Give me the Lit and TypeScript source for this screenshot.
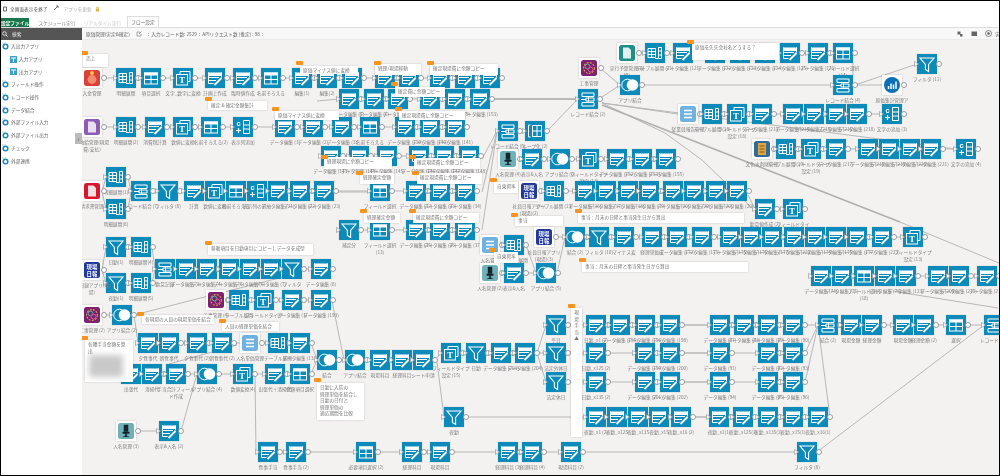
import { LitElement, html, css, svg } from "lit";
import { customElement } from "lit/decorators.js";

const OX = 83, OY = 40;
type N = [number, string, string?];
type G = { y: number; items: N[]; nochain?: boolean };

const E = "edit", S = "sel", X = "exp", T = "t", M = "merge", F = "filter", O = "toggle", C = "col", L = "loop";
const ED = "データ編集";

const groups: G[] = [
  { y: 68, items: [[83, "a-pig", "入金管理"], [117, X, "明細展開"], [142, S, "項目選択"], [174, T, "文字_数字に変換"], [206, E, "計画上作成"], [234, E, "臨時値作成"], [262, S, "名前そろえる"], [293, E, "編集(1)"], [318, E, "編集(2)"], [343, E], [376, E], [400, E], [431, E], [456, E], [481, E]] },
  { y: 89, items: [[340, E, ED + " (5)"], [365, E, ED + " (6)"], [389, E, ED + " (7)"], [421, E, ED + " (8)"], [446, E, ED + " (9)"], [471, E, ED + " (153)"], [579, M, "レコード結合 (2)"]] },
  { y: 117, items: [[83, "a-doc-p", "大曲給管理(現場費/支払)"], [117, X, "明細展開(2)"], [146, E, "消費税計算"], [174, T, "数値に変換"], [202, S, "名前そろえる(2)"], [234, C, "表示列追加"], [276, E, ED + " (1)"], [304, E, ED + " (2)"], [333, E, ED + " (3)"], [361, S, "名前そろえる"], [396, E, ED + " (139)"], [421, E, ED + " (140)"], [446, E, ED + " (141)"]] },
  { y: 146, items: [[322, E, ED + " (143)"], [350, E, ED + " (144)"], [378, E, ED + " (145)"], [410, E, ED + " (146)"], [435, E, ED + " (147)"], [460, E, ED + " (148)"]] },
  { y: 167, items: [[107, X, "明細展開(1)"]], nochain: true },
  { y: 199, items: [[107, X, "明細展開(8)"]], nochain: true },
  { y: 181, items: [[83, "a-doc-r", "請求書管理"]], nochain: true },
  { y: 181, items: [[132, M, "レコード結合 (7)"], [159, F, "フィルタ (8)"], [185, E, "計算"], [206, T, "数値に変換"], [227, S, "名前そろえる"], [248, C, "表示列の追加"], [269, E, ED + " (21)"], [291, E, ED + " (22)"], [315, E, ED + " (23)"], [371, S, "フィールド選択"], [407, E, ED + " (32)"], [431, E, ED + " (33)"], [456, E, ED + " (34)"]] },
  { y: 220, items: [[340, F, "補定分"], [371, S, "フィールド選択 (13)"], [407, E, ED + " (35)"], [431, E, ED + " (36)"], [456, E, ED + " (37)"]] },
  { y: 237, items: [[107, F, "日勤(1)"], [132, X, "明細展開(4)"]] },
  { y: 273, items: [[107, F, "夜勤(1)"], [132, X, "明細展開(5)"]] },
  { y: 260, items: [[83, "a-nippo", "毎日録アプリ(現場)"]], nochain: true },
  { y: 259, items: [[156, M, "勤怠記録"], [177, E, ED + " (3)"], [198, E, ED + " (4)"], [220, E, ED + " (5)"], [241, E, ED + " (6)"], [262, E, ED + " (7)"], [283, F, "フィルタ"], [312, E, ED + " (8)"]] },
  { y: 290, items: [[207, "a-kouji", "工事管理 (4)"], [230, X, "テーブル展開"], [255, T, "フィールドタイプ"], [283, E, ED + " (1)"], [312, E, ED + " (193)"]] },
  { y: 305, items: [[83, "a-kouji", "工事管理 (2)"], [113, O, "アプリ結合 (2)"]] },
  { y: 333, items: [[139, E, "夕食事代"], [160, E, "朝食事代"], [188, E, "夕食事代 (2)"], [213, E, "朝食事代 (2)"], [241, "a-list", "人名単価管理"], [269, X, "テーブル展開"], [291, E, ED + " (132)"]] },
  { y: 364, items: [[122, E, "出張代"], [143, E, "清掃代"], [167, E, "手当合計フィールド作成"], [198, O, "アプリ結合 (4)"], [234, T, "数値変換(4)"], [266, E, "出張代＋清掃代"], [291, S, "金額項目選択"]] },
  { y: 421, items: [[117, "a-chair", "人名管理 (3)"], [160, E, "表示&人名 (2)"]] },
  { y: 442, items: [[259, E, "食事手当"], [287, E, "食事手当 (2)"], [357, S, "必要項目選択 (2)"], [403, E, "経理科目"], [431, E, "現場科目"], [499, E, "経理科目 (3)"], [523, E, "経理科目 (4)"], [562, E, "現場科目 (2)"], [798, F, "フィルタ (8)"]] },
  { y: 350, items: [[318, O, "結合"], [346, O, "アプリ結合"], [371, E, "現場科目"], [393, E, "経理科目"], [414, E, "シート申請"]] },
  { y: 343, items: [[442, T, "フィールドタイプ設定 (15)"], [467, F, "日勤"], [492, E, ED + " (203)"], [516, E, ED + " (204)"]] },
  { y: 315, items: [[547, F, "平日"]] },
  { y: 343, items: [[547, F, "法定外休日"]] },
  { y: 372, items: [[547, F, "法定休日"]] },
  { y: 407, items: [[445, F, "夜勤"]] },
  { y: 315, items: [[587, E, "日勤_x1 (2)"], [611, E, ED + " (195)"], [636, E, ED + " (196)"], [661, E, ED + " (198)"], [711, E, ED + " (87)"], [735, E, ED + " (88)"], [759, E, ED + " (89)"], [784, E, ED + " (90)"], [819, M, "結合 (2)"], [842, E, "現場金額"], [863, E, "経理金額"], [894, E, "現場金額"], [915, E, "経理金額 (2)"], [947, S, "選択"], [985, M, "レコード結合"]] },
  { y: 343, items: [[587, E, "日勤_x125 (2)"], [636, E, ED + " (199)"], [661, E, ED + " (200)"], [711, E, ED + " (91)"], [759, E, ED + " (92)"], [784, E, ED + " (93)"]] },
  { y: 372, items: [[587, E, "日勤_x135 (2)"], [636, E, ED + " (201)"], [661, E, ED + " (202)"], [711, E, ED + " (94)"], [759, E, ED + " (95)"], [784, E, ED + " (96)"]] },
  { y: 407, items: [[587, E, "夜勤_x1 (2)"], [608, E, "夜勤_x125"], [629, E, "夜勤_x135"], [650, E, "夜勤_x15"], [672, E, "夜勤_x16 (2)"], [710, E, "夜勤_x1(1)"], [734, E, "夜勤_x125(1)"], [759, E, "夜勤_x135(1)"], [784, E, "夜勤_x15(1)"], [809, E, "夜勤_x16(1)"]] },
  { y: 43, items: [[618, "a-doc-t", "実行予算管理(現場)"], [646, X, "テーブル展開 (11)"], [674, E, ED + " (121)"], [706, E, ED + " (122)"], [731, E, ED + " (123)"], [756, E, ED + " (124)"], [781, E, ED + " (125)"], [809, E, ED + " (126)"], [834, S, "フィールド選択 (14)"]] },
  { y: 58, items: [[580, "a-kouji", "工事管理"]], nochain: true },
  { y: 75, items: [[621, O, "アプリ結合"]], nochain: true },
  { y: 75, items: [[834, M, "レコード結合 (4)"]], nochain: true },
  { y: 54, items: [[918, F, "フィルタ (11)"]], nochain: true },
  { y: 75, items: [[883, "a-dash", "原価集計管理ア"]], nochain: true },
  { y: 104, items: [[679, "a-list", "従業員報告管理"], [703, X, "テーブル展開 (18)"], [728, T, "フィールドタイプ設定 (18)"], [753, E, ED + " (213)"], [784, E, ED + " (214)"], [805, E, ED + " (215)"], [827, E, ED + " (216)"], [848, E, ED + " (218)"], [883, C, "文字の追加 (3)"]] },
  { y: 139, items: [[753, "a-book", "文化水利財管理"], [777, X, "テーブル展開 (19)"], [802, T, "フィールドタイプ設定 (19)"], [827, E, ED + " (217)"], [859, E, ED + " (218)"], [880, E, ED + " (219)"], [901, E, ED + " (220)"], [922, E, ED + " (221)"], [957, C, "文字の追加 (4)"]] },
  { y: 121, items: [[499, M, "レコード結合 (5)"], [526, L, "ループ化 (2)"]] },
  { y: 149, items: [[499, "a-chair", "人名管理 (4)"], [523, E, "表示&人名"], [551, O, "アプリ結合 (6)"], [580, T, "フィールドタイプ設定 (14)"], [608, E, ED + " (152)"], [633, E, ED + " (153)"], [657, E, ED + " (155)"]] },
  { y: 181, items: [[520, "a-nippo", "社員日報アプリ(現場)(2)"], [545, X, "テーブル展開 (13)"], [576, E, ED + " (16)"], [597, E, ED + " (17)"], [619, E, ED + " (18)"], [640, E, ED + " (19)"], [664, E, ED + " (20)"], [685, E, ED + " (20)"], [707, E, ED + " (20)"], [728, E, ED + " (20)"]] },
  { y: 199, items: [[756, E, "勤怠値作成 (2)"], [784, T, "フィールドタイ"]] },
  { y: 227, items: [[535, "a-nippo", "社員日報アプリ(現場)(3)"], [566, O, "結合 (2)"], [590, F, "フィルタ (10)"], [615, E, "マイナス変"], [643, E, "経理単価成"], [668, E, ED + " (172)"], [693, E, ED + " (173)"], [721, E, ED + " (175)"], [742, E, ED + " (176)"], [763, E, ED + " (177)"], [785, E, ED + " (222)"], [806, E, ED + " (174)"], [827, E, ED + " (175)"], [848, E, ED + " (177)"], [873, E, ED + " (223)"], [904, T, "フィールドタイプ設定 (13)"]] },
  { y: 266, items: [[812, E, ED + " (74)"], [833, E, ED + " (75)"], [855, S, "フィールド選択 (18)"], [876, E, ED + " (76)"], [897, E, ED + " (123)"], [929, E, ED + " (209)"], [950, E, ED + " (210)"], [978, E, ED + " (211)"]] },
  { y: 235, items: [[481, "a-list", "人名管理"], [505, X, "テーブル展開"]] },
  { y: 263, items: [[481, "a-chair", "人名管理 (2)"], [505, E, "表示&人名"], [537, O, "アプリ結合 (5)"]] },
];

const notes: [number, number, number, number, string, number, number][] = [
  [84, 54, 25, 13, "売上", 82, 51],
  [301, 66, 58, 8, "原価マイナス値に変換", 297, 61],
  [376, 64, 46, 11, "経理/現場移動", 375, 61],
  [431, 64, 68, 11, "確定現場費に余額コピー", 428, 61],
  [396, 87, 50, 10, "確定費に余額コピー", 392, 82],
  [400, 111, 66, 9, "確定現場費に余額コピー", 396, 107],
  [209, 101, 59, 9, "確定 & 確定金額集計", 206, 97],
  [276, 111, 64, 9, "原価マイナス値に変換", 273, 107],
  [693, 43, 87, 17, "原価を先先会社名どうする？", 688, 40],
  [209, 244, 105, 11, "移動項目を日勤項目にコピーしデータを成型", 206, 241],
  [143, 315, 72, 9, "各現場の人員の現場単価を結合", 138, 312],
  [223, 322, 57, 9, "人員の経理単価を結合", 220, 319],
  [325, 157, 68, 12, "経理現場に余額コピー", 322, 155],
  [415, 158, 66, 11, "確定現場費に余額コピー", 410, 155],
  [361, 173, 34, 11, "経理確定金額", 357, 171],
  [418, 173, 65, 11, "確定現場費に余額コピー", 413, 171],
  [365, 213, 36, 10, "経理確定金額", 361, 209],
  [414, 213, 66, 10, "確定現場費に余額コピー", 410, 209],
  [495, 182, 24, 11, "自東掲率", 491, 178],
  [516, 216, 48, 10, "事当", 512, 213],
  [579, 213, 166, 10, "事当：月末の日締と事当発生日から算出", 576, 209],
  [583, 262, 166, 10, "事当：月末の日締と事当発生日から算出", 580, 258],
  [495, 252, 24, 11, "自東掲率", 490, 248],
];

const lines: [number, number[]][] = [
  [1, [103, 192, 107, 177]], [1, [103, 192, 107, 209]], [1, [129, 177, 132, 192]], [1, [129, 209, 132, 192]],
  [1, [103, 270, 107, 247]], [1, [103, 270, 107, 283]], [1, [153, 247, 156, 269]], [1, [153, 283, 156, 269]],
  [1, [135, 315, 284, 277]], [1, [135, 315, 139, 343]], [1, [170, 364, 238, 345]],
  [1, [312, 343, 318, 360]], [1, [312, 374, 318, 360]],
  [1, [182, 431, 198, 374]], [1, [256, 374, 257, 452]],
  [1, [338, 360, 346, 360]], [1, [333, 301, 345, 360]], [1, [436, 360, 442, 353]], [1, [438, 362, 445, 417]],
  [1, [538, 353, 547, 325]], [1, [538, 353, 547, 353]], [1, [538, 353, 547, 382]],
  [1, [569, 325, 587, 325]], [1, [569, 353, 587, 353]], [1, [569, 382, 587, 382]], [1, [467, 417, 587, 417]],
  [1, [683, 325, 711, 325]], [1, [683, 353, 711, 353]], [1, [683, 382, 711, 382]], [1, [693, 417, 710, 417]],
  [1, [806, 353, 819, 325]], [1, [806, 382, 819, 325]], [1, [831, 417, 819, 325]], [1, [818, 452, 985, 325]],
  [2, [491, 99, 579, 99]],
  [1, [601, 68, 621, 85]], [1, [600, 99, 621, 85]], [1, [644, 85, 834, 85]],
  [1, [856, 85, 918, 64]], [1, [856, 85, 883, 85]], [1, [854, 63, 854, 75]],
  [1, [603, 103, 679, 114]], [1, [603, 103, 957, 149]], [1, [603, 103, 666, 133, 703, 160, 754, 209]],
  [2, [603, 105, 901, 222]], [1, [901, 222, 1000, 263]], [1, [899, 292, 999, 308]],
  [1, [749, 195, 756, 209]],
  [1, [548, 131, 579, 99]], [1, [483, 159, 498, 131]], [1, [483, 192, 498, 131]], [1, [483, 230, 498, 131]],
  [1, [527, 245, 537, 273]], [1, [558, 273, 566, 237]],
  [1, [336, 192, 371, 192]], [1, [318, 101, 340, 99]],
];

function icon(t: string) {
  const w = "#fff";
  switch (t) {
    case E:
      return svg`<rect x="3" y="4.5" width="14" height="3.5" fill="${w}"/><path d="M3.5 4.500v11h7M16.500 4.500v5M3 9.500h11M3 12.500h8" fill="none" stroke="${w}"/><path d="M9.500 17 16.500 10" stroke="#0c8bba" stroke-width="3.400"/><path d="M9.500 17 16.500 10" stroke="${w}" stroke-width="1.800"/>`;
    case S:
      return svg`<rect x="3" y="4.500" width="14" height="3" fill="${w}"/><rect x="3.500" y="5" width="13" height="11" fill="none" stroke="${w}"/><path d="M3 11.500h14M10 7v9" stroke="${w}"/>`;
    case X:
      return svg`<path d="M3 5.500h7.500v9H3zM3 8.500h7.500M3 11.500h7.500M6.700 5.500v9M13.500 4.500h3v11h-3zM13.500 8h3M13.500 12h3" fill="none" stroke="${w}"/><path d="M10 15.500h3" stroke="${w}"/>`;
    case T:
      return svg`<path d="M7 6V3.500h10v10h-2.500" fill="none" stroke="${w}"/><rect x="3.500" y="6.500" width="11" height="10.500" fill="none" stroke="${w}"/><text x="9" y="15" text-anchor="middle" font-size="8.500" font-weight="700" font-family="Liberation Serif, serif" fill="${w}">T</text>`;
    case M:
      return svg`<path d="M4 4h12v3.500H4zM8 9h8v3H8zM4 13.500h12V17H4zM3 10.500h5M10.500 7.500v6" fill="none" stroke="${w}"/>`;
    case F:
      return svg`<path d="M3 4h14l-5.400 6.500v7l-3.200-2v-5z" fill="none" stroke="${w}" stroke-width="1.100"/>`;
    case O:
      return svg`<circle cx="7.500" cy="10" r="5.800" fill="none" stroke="${w}"/><circle cx="12.500" cy="10" r="5.800" fill="${w}"/>`;
    case C:
      return svg`<text x="5.500" y="8.500" text-anchor="middle" font-size="7.500" font-weight="700" font-family="Liberation Sans, sans-serif" fill="${w}">c</text><path d="M3 13.500h5M5.500 11v5" stroke="${w}" stroke-width="1.200"/><path d="M10.500 3.500h6v13h-6zM10.500 8h6M10.500 12h6" fill="none" stroke="${w}"/>`;
    case L:
      return svg`<path d="M5.500 4H3.500v12h2" fill="none" stroke="${w}"/><path d="M7.500 4.500h9v11h-9zM12 4.500v11M7.500 10h9" fill="none" stroke="${w}"/>`;
  }
  return svg``;
}

function app(t: string) {
  switch (t) {
    case "a-pig":
      return svg`<rect x="2" y="2" width="16" height="16" rx="2.500" fill="#d9413a"/><circle cx="10" cy="11.500" r="4.400" fill="#f08b6d"/><circle cx="10" cy="5" r="2" fill="#f5c23b"/>`;
    case "a-doc-p":
      return svg`<rect x="2" y="2" width="16" height="16" rx="2.500" fill="#8e5bb5"/><path d="M6 4.500h5.500L14 7v8.500H6z" fill="#e7e0f0"/>`;
    case "a-doc-r":
      return svg`<rect x="2" y="2" width="16" height="16" rx="2.500" fill="#db1530"/><path d="M6 4.500h5.500L14 7v8.500H6z" fill="#f3dfe0"/>`;
    case "a-doc-t":
      return svg`<rect x="2" y="2" width="16" height="16" rx="2.500" fill="#1b8f88"/><path d="M6 4.500h5.500L14 7v8.500H6z" fill="#dff0ee"/>`;
    case "a-nippo":
      return svg`<rect x="2" y="2" width="16" height="16" rx="2.500" fill="#23399a"/><text x="10" y="9" text-anchor="middle" font-size="5.400" font-weight="700" font-family="Noto Sans CJK JP, sans-serif" fill="#fff">現場</text><text x="10" y="15.500" text-anchor="middle" font-size="5.400" font-weight="700" font-family="Noto Sans CJK JP, sans-serif" fill="#fff">日報</text>`;
    case "a-kouji":
      return svg`<rect x="2" y="2" width="16" height="16" rx="2.500" fill="#7d2170"/><circle cx="10" cy="10" r="5.400" fill="none" stroke="#d8a13a" stroke-width="1.100" stroke-dasharray="2 1.200"/><circle cx="8.500" cy="8.500" r="2.400" fill="none" stroke="#4fb5a8"/><circle cx="11.600" cy="11.600" r="2.400" fill="none" stroke="#d35c8c"/>`;
    case "a-chair":
      return svg`<rect x="2" y="2" width="16" height="16" rx="2.500" fill="#6fb1b8"/><path d="M8 4h4v6.500H8zM6.800 11h6.400v1.400H6.800zM9.400 12.400h1.200v2.600H9.400zM6.800 16l3.200-1.200 3.200 1.200" fill="#17242a" stroke="#17242a" stroke-width=".5"/>`;
    case "a-list":
      return svg`<rect x="2" y="2" width="16" height="16" rx="2.500" fill="#6fb2e2"/><path d="M6 6.500h8M6 10h8M6 13.500h8" stroke="#fff" stroke-width="1.400"/>`;
    case "a-dash":
      return svg`<circle cx="10" cy="10" r="8" fill="#0b6fb8"/><path d="M6.500 14V11M9 14V8.500M11.500 14V9.500M14 14V6.500" stroke="#fff" stroke-width="1.500"/>`;
    case "a-book":
      return svg`<rect x="2" y="2" width="16" height="16" rx="2.500" fill="#2f6b9c"/><rect x="6" y="4" width="8" height="12" fill="#e0a63a"/><path d="M7.500 7h5M7.500 10h5M7.500 13h5" stroke="#6a4a14" stroke-width=".8"/>`;
  }
  return svg``;
}

const menu: [string, boolean?][] = [
  ["入出力アプリ"], ["入力アプリ", true], ["出力アプリ", true], ["フィールド操作"], ["レコード操作"],
  ["データ結合"], ["外部ファイル入力"], ["外部ファイル出力"], ["チェック"], ["外部連携"],
];

@customElement("app-root")
export class AppRoot extends LitElement {
  static styles = css`
    :host { display: block; width: 1000px; height: 476px; font-family: "Noto Sans CJK JP", "Noto Sans", sans-serif; }
    .frame { box-sizing: border-box; width: 1000px; height: 476px; border: 1px solid #000; display: flex; flex-direction: column; overflow: hidden; background: #fff; filter: blur(0.45px); }
    .top { height: 15px; flex: none; display: flex; align-items: center; gap: 3px; padding-left: 2px; font-size: 4.7px; color: #555; }
    .top .dim { color: #b0b0b0; }
    .tabs { height: 11px; flex: none; display: flex; align-items: flex-end; font-size: 4.7px; color: #888; border-bottom: 1px solid #ddd; white-space: nowrap; }
    .tab { height: 9px; display: flex; align-items: center; justify-content: center; }
    .tab.green { width: 28px; background: #17774a; color: #fff; font-weight: 700; }
    .tab.sch { width: 38px; margin-left: 9px; }
    .tab.off { width: 37px; margin-left: 8px; color: #c4c4c4; }
    .tab.on { width: 32px; height: 11px; margin-left: 6px; border: 1px solid #ddd; border-bottom: 0; box-sizing: border-box; background: #fff; color: #666; }
    .main { flex: 1; display: flex; min-height: 0; }
    .side { width: 81px; flex: none; background: #fff; position: relative; }
    .search { height: 12px; background: #555; color: #eee; font-size: 4.7px; display: flex; align-items: center; gap: 4px; padding-left: 1px; }
    .item { height: 12.7px; display: flex; align-items: center; gap: 2px; font-size: 4.7px; color: #666; padding-left: 1px; box-sizing: border-box; }
    .item.sub { padding-left: 9px; }
    .handle { position: absolute; right: 0; top: 105px; width: 7px; height: 11px; background: #bbb; color: #666; font-size: 7px; line-height: 11px; text-align: center; }
    .body { flex: 1; display: flex; flex-direction: column; min-width: 0; }
    .bar { height: 12px; flex: none; background: #f8f8f8; display: flex; align-items: center; gap: 3px; padding-left: 4px; font-size: 4.7px; color: #666; border-bottom: 1px solid #eaeaea; box-sizing: border-box; white-space: nowrap; }
    .bar .spring { flex: 1; }
    .stage { position: relative; flex: 1; background: #f4f1f1; overflow: hidden; }
    .wires { position: absolute; left: 0; top: 0; width: 917px; height: 436px; }
    .node { position: absolute; width: 20px; height: 20px; background: #0c8bba; box-shadow: 0 0 1px rgba(0,0,0,.25); }
    .node.app { background: #fff; box-shadow: 0 0 2px rgba(0,0,0,.2); }
    .ico { display: block; width: 20px; height: 20px; }
    .in { position: absolute; left: -3px; top: 7px; width: 5px; height: 6px; }
    .out { position: absolute; right: -5px; top: 7px; width: 6px; height: 6px; border-radius: 50%; background: #fff; border: 1px solid #9a9a9a; box-sizing: border-box; }
    .lbl { position: absolute; left: -9px; top: 22px; width: 38px; font-size: 4.7px; line-height: 7px; color: #808080; text-align: center; }
    .note { position: absolute; box-sizing: border-box; background: #fff; box-shadow: 0 0 2px rgba(0,0,0,.18); font-size: 4.7px; line-height: 7px; color: #777; padding: 1px 3px; white-space: nowrap; overflow: hidden; }
    .note.big { white-space: normal; line-height: 6.5px; }
    .tag { position: absolute; width: 7px; height: 4px; background: #f7941e; border-radius: 1px; }
    .blob { width: 34px; height: 22px; margin: 1px 0 0 1px; background: #c9c9c9; filter: blur(3px); }
    .panel { position: absolute; box-sizing: border-box; background: #fff; box-shadow: 0 0 2px rgba(0,0,0,.2); font-size: 4.7px; line-height: 6.500px; color: #777; text-align: center; padding-top: 1px; }
  `;

  private node(x: number, y: number, t: string, label?: string) {
    const isApp = t.startsWith("a-");
    return html`<div class="node ${isApp ? "app" : ""}" style="left:${x - OX}px;top:${y - OY}px">
      <svg class="ico" viewBox="0 0 20 20">${isApp ? app(t) : icon(t)}</svg>
      ${isApp ? "" : html`<svg class="in" viewBox="0 0 5 6"><path d="M.5.5 4.500 3 .5 5.500z" fill="#fff" stroke="#9a9a9a" stroke-width=".7"/></svg>`}
      <span class="out"></span>
      ${label ? html`<div class="lbl">${label}</div>` : ""}
    </div>`;
  }

  render() {
    const chain: string[] = [];
    for (const g of groups) {
      if (g.nochain) continue;
      for (let i = 0; i + 1 < g.items.length; i++) {
        const a = g.items[i][0] + 22, b = g.items[i + 1][0], y = g.y + 10;
        chain.push(`M${a - OX} ${y - OY}H${b - OX}`);
      }
    }
    return html`<div class="frame">
      <div class="top">
        <svg width="4" height="6" viewBox="0 0 4 6"><path d="M.5 1h3v4h-3z" fill="none" stroke="#666"/></svg>
        <span>全画面表示を終了</span>
        <svg width="7" height="7" viewBox="0 0 7 7" style="margin-left:2px"><path d="M1 5 5 1M3 1h2v2" fill="none" stroke="#777"/></svg>
        <span class="dim" style="margin-left:1px">アプリを更新</span>
        <svg width="5" height="6" viewBox="0 0 6 7"><rect x="1" y="3" width="4" height="3.500" fill="#e3b341"/><path d="M2 3V1.500h2V3" fill="none" stroke="#e3b341"/></svg>
      </div>
      <div class="tabs">
        <div class="tab green">設定ファイル</div>
        <div class="tab sch">スケジュール実行</div>
        <div class="tab off">リアルタイム実行</div>
        <div class="tab on">フロー設定</div>
      </div>
      <div class="main">
        <div class="side">
          <div class="search">
            <svg width="6" height="6" viewBox="0 0 6 6"><circle cx="2.500" cy="2.500" r="1.800" fill="none" stroke="#ddd"/><path d="M4 4l1.600 1.600" stroke="#ddd"/></svg>
            <span>検索</span>
          </div>
          ${menu.map(([t, sub]) => html`<div class="item ${sub ? "sub" : ""}">
            ${sub
              ? html`<svg width="7" height="7" viewBox="0 0 7 7"><rect width="7" height="7" fill="#3aa0c8"/><path d="M1 2h5M3.500 2v4" stroke="#fff"/></svg>`
              : html`<svg width="7" height="8" viewBox="0 0 7 8"><circle cx="3.500" cy="4.500" r="2.300" fill="none" stroke="#1e88c7" stroke-width="1.500"/><path d="M0 1h4" stroke="#9cc" stroke-width=".8"/></svg>`}
            <span>${t}</span>
          </div>`)}
          <div class="handle">‹</div>
        </div>
        <div class="body">
          <div class="bar">
            <span>原価管理(実定&確定)</span>
            <svg width="6" height="6" viewBox="0 0 6 6" style="margin-left:3px"><path d="M1 1h3v1M1 1v4h4V3M3 3l2.500-2.500" fill="none" stroke="#888" stroke-width=".7"/></svg>
            <span style="margin-left:3px">:&nbsp; 入力レコード数: 2529 &nbsp;:&nbsp; APIリクエスト数 (推定) : 98 &nbsp;:</span>
            <span class="spring"></span>
            <svg width="6" height="6" viewBox="0 0 6 6"><path d="M.5.5h3v3h-3zM3 3h2.500v2.500H3z" fill="#666"/></svg>
            <svg width="7" height="6" viewBox="0 0 7 6" style="margin-left:5px"><rect x=".5" y=".5" width="5.500" height="4.500" fill="#666"/></svg>
            <svg width="7" height="7" viewBox="0 0 7 7" style="margin-left:4px"><circle cx="3.500" cy="3.500" r="3" fill="none" stroke="#555" stroke-width=".7"/><circle cx="3.500" cy="3.500" r="1.200" fill="#555"/></svg>
            <span style="width:4px;overflow:hidden">実</span>
          </div>
          <div class="stage">
            <svg class="wires" viewBox="0 0 917 436" fill="none">
              <path d="${chain.join("")}" stroke="#b8b8b8"/>
              ${lines.map(([w, p]) => svg`<polyline points="${p.map((v, i) => v - (i % 2 ? OY : OX)).join(" ")}" stroke="${w > 1 ? "#b0b0b0" : "#b8b8b8"}" stroke-width="${w > 1 ? 1.6 : 1}"/>`)}
            </svg>
            ${groups.map((g) => g.items.map(([x, t, l]) => this.node(x, g.y, t, l)))}
            <div class="panel" style="left:${572 - OX}px;top:${308 - OY}px;width:11px;height:129px">現<br />場<br />手<br />当<br />▲</div>
            <div class="tag" style="left:${569 - OX}px;top:${304 - OY}px"></div>
            ${notes.map(([x, y, w, h, t, tx, ty]) => html`
              <div class="note" style="left:${x - OX}px;top:${y - OY}px;width:${w}px;height:${h}px">${t}</div>
              <div class="tag" style="left:${tx - OX}px;top:${ty - OY}px"></div>`)}
            <div class="note big" style="left:${86 - OX}px;top:${340 - OY}px;width:48px;height:42px">各種手当金額を算出<div class="blob"></div></div>
            <div class="tag" style="left:${82 - OX}px;top:${336 - OY}px"></div>
            <div class="note big" style="left:${318 - OX}px;top:${383 - OY}px;width:47px;height:37px">日勤に入院の<br />経理単価を結合し<br />日勤の日付と<br />経理単価の<br />適応期間を比較</div>
            <div class="tag" style="left:${315 - OX}px;top:${378 - OY}px"></div>
          </div>
        </div>
      </div>
    </div>`;
  }
}
